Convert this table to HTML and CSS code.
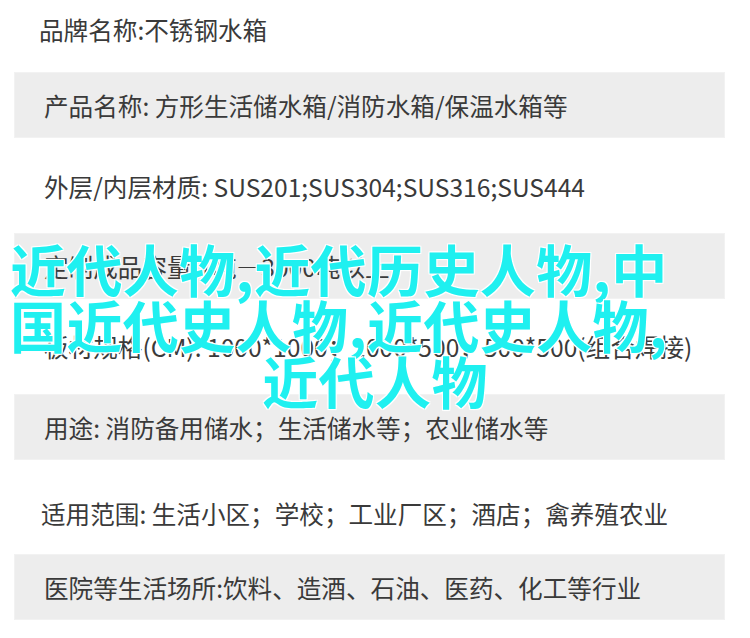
FILE: index.html
```html
<!DOCTYPE html>
<html lang="zh-CN">
<head>
    <meta charset="UTF-8">
    <meta name="viewport" content="width=device-width, initial-scale=1.0">
    <title>不锈钢水箱</title>
    <link rel="stylesheet" href="styles.css">
</head>
<body>
    <div class="specs">
        <div class="row first">品牌名称:不锈钢水箱</div>
        <div class="row shade">产品名称: 方形生活储水箱/消防水箱/保温水箱等</div>
        <div class="row">外层/内层材质: SUS201;SUS304;SUS316;SUS444</div>
        <div class="row shade">定制成品容量:1吨—3000吨以上</div>
        <div class="row">板材规格(CM): 1000*1000；1000*500；500*500(组合焊接)</div>
        <div class="row shade">用途: 消防备用储水；生活储水等；农业储水等</div>
        <div class="row low">适用范围: 生活小区；学校；工业厂区；酒店；禽养殖农业</div>
        <div class="row shade">医院等生活场所:饮料、造酒、石油、医药、化工等行业</div>
    </div>

    <!-- title overlay -->
    <div class="overlay">
        <span class="line">近代人物,近代历史人物,中</span>
        <span class="line">国近代史人物,近代史人物,</span>
        <span class="line center">近代人物</span>
    </div>
</body>
</html>
```

FILE: styles.css
```css
*{
    font-family: "Noto Sans CJK SC", "Noto Sans", sans-serif;
}
body{
    margin: 0;
    background-color: #ffffff;
    position: relative;
    height: 638px;
    overflow: hidden;
}
.specs{
    display: flex;
    flex-direction: column;
    gap: 14.33px;
    padding: 0 25px 0 14px;
}
.row{
    display: flex;
    align-items: center;
    height: 66px;
    padding-left: 30px;
    font-size: 24.6px;
    color: #3a3a3a;
    white-space: nowrap;
}
.row.first{
    height: 58px;
    padding-left: 25px;
}
.row.low{
    padding-top: 12px;
    height: 54px;
    padding-left: 27px;
}
.shade{
    background-color: #ededed;
    box-shadow: inset 0 0 0 1px #f2f2f2;
}

/* big cyan title on top of the table */
.overlay{
    position: absolute;
    top: 240px;
    left: 0;
    width: 100%;
}
.line{
    display: block;
    padding-left: 10px;
    font-size: 56px;
    line-height: 56px;
    font-weight: 700;
    letter-spacing: 0.4px;
    color: #1ff0f0;
    white-space: nowrap;
    text-shadow:
        1px 1px 0 #fff,
        -1px -1px 0 #fff,
        1px -1px 0 #fff,
        -1px 1px 0 #fff,
        0 0 3px rgba(255, 255, 255, 0.8);
}
.line.center{
    padding-left: 0;
    text-align: center;
}
```
